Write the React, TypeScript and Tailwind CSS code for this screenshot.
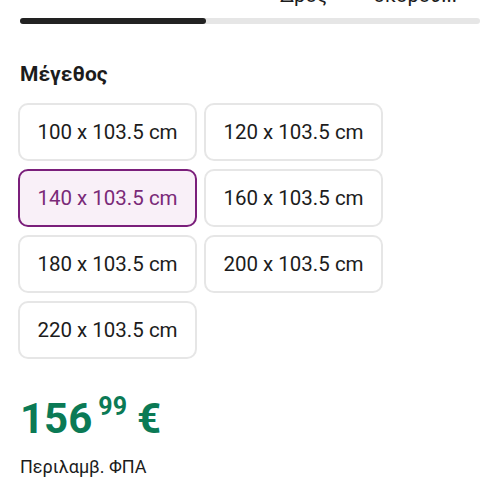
const sizes = [
  "100 x 103.5 cm",
  "120 x 103.5 cm",
  "140 x 103.5 cm",
  "160 x 103.5 cm",
  "180 x 103.5 cm",
  "200 x 103.5 cm",
  "220 x 103.5 cm",
];

export default function App() {
  const selected = "140 x 103.5 cm";

  return (
    <div className="w-[500px] h-[500px] overflow-hidden bg-white font-['Roboto',sans-serif] text-[#1c1c1c]">
      {/* tab labels, scrolled mostly out of view */}
      <div className="-mt-[17px] flex h-[24px] text-[20px] leading-[24px]">
        <span className="ml-[280px]">Δρος</span>
        <span className="ml-[46px]">σκορου...</span>
      </div>

      <div className="mt-[11px] mx-[20px] h-[6px] rounded-full bg-[#e6e6e6]">
        <div className="h-[6px] w-[186px] rounded-full bg-[#222222]" />
      </div>

      <h2 className="mt-[36px] ml-[20px] text-[21px] leading-[28px] font-bold">Μέγεθος</h2>

      <div className="mt-[15px] ml-[18px] grid grid-cols-[179px_179px] gap-x-[7px] gap-y-[8px]">
        {sizes.map((s) => {
          const active = s === selected;
          return (
            <button
              key={s}
              className={
                active
                  ? "h-[58px] rounded-[10px] border-2 border-[#7b1f7b] bg-[#f9f0f8] text-[20.5px] text-[#7a2a78]"
                  : "h-[58px] rounded-[10px] border-2 border-[#e6e6e6] bg-white text-[20.5px] text-[#1c1c1c]"
              }
            >
              {s}
            </button>
          );
        })}
      </div>

      <div className="mt-[36px] ml-[20px] flex items-start text-[#0b7a55] font-bold">
        <span className="text-[42px] leading-[48px]">156</span>
        <span className="ml-[6px] -mt-[2px] text-[25px] leading-[28px]">99</span>
        <span className="ml-[10px] text-[42px] leading-[48px]">€</span>
      </div>

      <p className="mt-[12px] ml-[20px] text-[18px] leading-[24px]">Περιλαμβ. ΦΠΑ</p>
    </div>
  );
}
